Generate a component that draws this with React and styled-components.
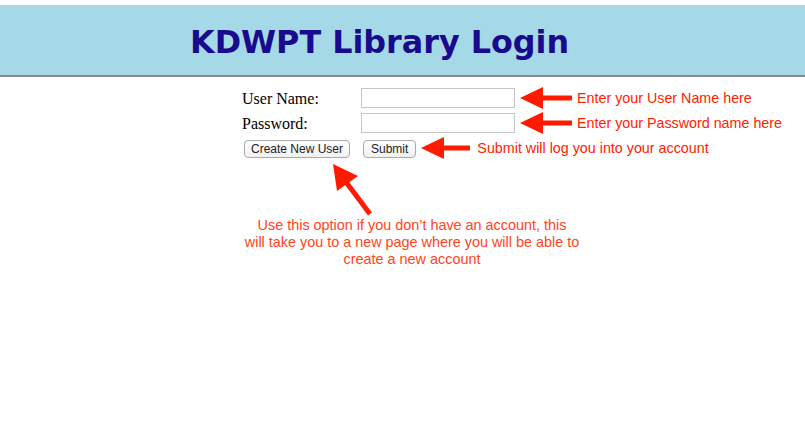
import React from 'react'
import styled, { createGlobalStyle } from 'styled-components'

const GlobalStyle = createGlobalStyle`
  body {
    margin: 0;
    background: #ffffff;
    font-family: "Liberation Serif", "Times New Roman", serif;
  }
`

const Header = styled.div`
  margin-top: 5px;
  height: 72px;
  box-sizing: border-box;
  background: #a6d9e8;
  border-bottom: 2px solid #888888;
  h1 {
    margin: 0;
    padding: 4px 0 0 190px;
    line-height: 66px;
    font-family: "DejaVu Sans", Verdana, sans-serif;
    font-weight: bold;
    font-size: 31.8px;
    color: #1a0a8d;
  }
`

const Form = styled.div`
  margin-top: 8px;
  padding-left: 242px;
`

const Row = styled.div`
  display: flex;
  align-items: center;
  height: ${props => props.h || 25}px;
`

const Label = styled.div`
  width: 119px;
  padding-top: 2px;
  font-size: 16px;
  color: #000000;
`

const Input = styled.input`
  width: 154px;
  height: 20px;
  box-sizing: border-box;
  margin: 0;
  padding: 0 3px;
  border: 1px solid #c6c6c6;
  background: #ffffff;
`

const ButtonCell = styled.div`
  width: ${props => props.w ? props.w + 'px' : 'auto'};
`

const Button = styled.button`
  margin: 0 0 0 2px;
  height: 18px;
  padding: 0 ${props => props.pad || 6}px;
  box-sizing: border-box;
  border: 1px solid #a9a9a9;
  border-radius: 4px;
  background: linear-gradient(#ffffff, #f1f1f1);
  font-family: "Liberation Sans", Arial, sans-serif;
  font-size: 12px;
  color: #222222;
  line-height: 16px;
`

const Note = styled.div`
  display: flex;
  align-items: center;
  margin-left: 5px;
  gap: ${props => props.gap || 5}px;
  font-family: "Liberation Sans", Arial, sans-serif;
  font-size: 14.3px;
  color: #ff2200;
  white-space: nowrap;
`

const Callout = styled.div`
  padding-left: 325px;
  height: 56px;
  svg {
    display: block;
  }
`

const Paragraph = styled.p`
  margin: 0 0 0 232px;
  width: 360px;
  text-align: center;
  font-family: "Liberation Sans", Arial, sans-serif;
  font-size: 14.4px;
  line-height: 17px;
  color: #ff4420;
`

const LeftArrow = ({ width }) => (
  <svg width={width} height={24} viewBox={`0 0 ${width} 24`}>
    <polygon points={`0,12 23,1 23,23`} fill="#ff1a00" />
    <rect x="22" y="9.5" width={width - 22} height="5" fill="#ff1a00" />
  </svg>
)

const DiagonalArrow = () => (
  <svg width="60" height="56" viewBox="0 0 60 56">
    <polygon points="8,3 33,15 12,30" fill="#ff1a00" />
    <line x1="21" y1="21" x2="45" y2="53" stroke="#ff1a00" strokeWidth="5" />
  </svg>
)

export default class App extends React.Component {
  render () {
    return (
      <>
        <GlobalStyle />
        <Header>
          <h1>KDWPT Library Login</h1>
        </Header>
        <Form>
          <Row>
            <Label>User Name:</Label>
            <Input type="text" />
            <Note>
              <LeftArrow width={52} />
              <span>Enter your User Name here</span>
            </Note>
          </Row>
          <Row>
            <Label>Password:</Label>
            <Input type="password" />
            <Note>
              <LeftArrow width={52} />
              <span>Enter your Password name here</span>
            </Note>
          </Row>
          <Row h={26}>
            <ButtonCell w={119}>
              <Button pad={6}>Create New User</Button>
            </ButtonCell>
            <ButtonCell>
              <Button pad={7}>Submit</Button>
            </ButtonCell>
            <Note gap={7}>
              <LeftArrow width={49} />
              <span>Submit will log you into your account</span>
            </Note>
          </Row>
        </Form>
        <Callout>
          <DiagonalArrow />
        </Callout>
        <Paragraph>
          Use this option if you don’t have an account, this<br />
          will take you to a new page where you will be able to<br />
          create a new account
        </Paragraph>
      </>
    )
  }
}
